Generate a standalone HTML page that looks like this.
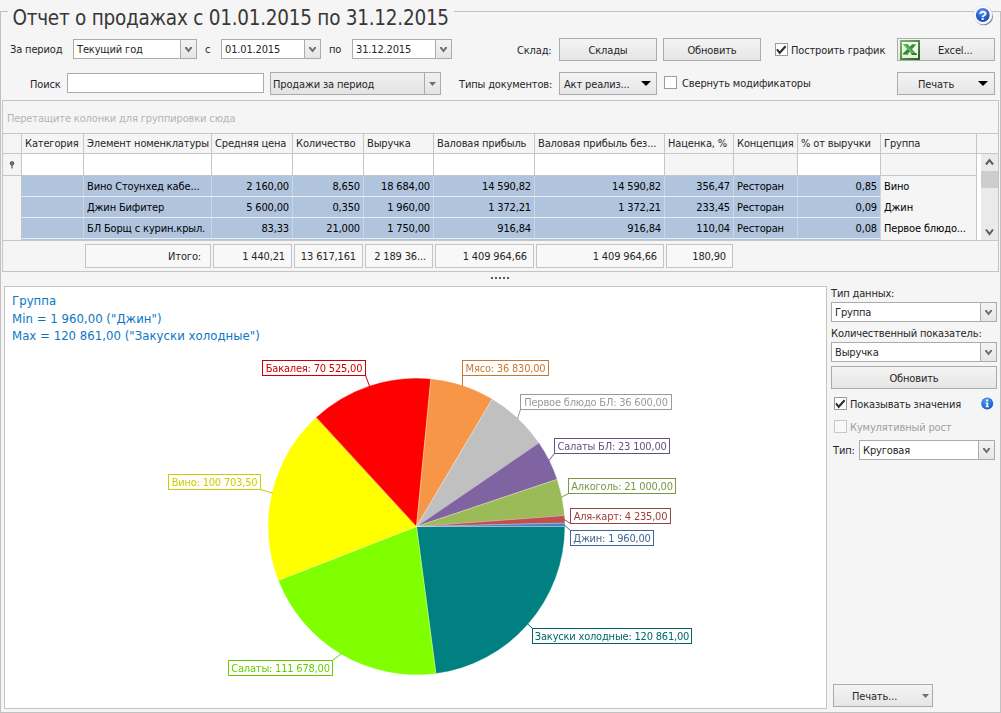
<!DOCTYPE html>
<html lang="ru"><head><meta charset="utf-8"><title>Отчет о продажах</title>
<style>
html,body{margin:0;padding:0}
body{width:1001px;height:713px;background:#f5f5f5;position:relative;overflow:hidden;font:11px "DejaVu Sans Condensed","Liberation Sans",sans-serif;color:#262626;letter-spacing:-0.15px}
div,span{box-sizing:border-box}
.a{position:absolute;white-space:nowrap}
.t{position:absolute;white-space:nowrap;line-height:14px;height:14px}
.btn{position:absolute;border:1px solid #ababab;background:linear-gradient(#f4f4f4,#e6e6e6);text-align:center;white-space:nowrap}
.inp{position:absolute;border:1px solid #ababab;background:#fff;white-space:nowrap}
.dd{position:absolute;top:0;right:0;bottom:0;width:16px;border-left:1px solid #ababab;background:linear-gradient(#f3f3f3,#e6e6e6)}
.cb{position:absolute;width:13px;height:13px;border:1px solid #9c9c9c;background:#fff}
.hc{position:absolute;top:134px;height:19px;border-right:1px solid #c6c6c6;padding:0 0 0 3px;line-height:20px;overflow:hidden;white-space:nowrap}
.fc{position:absolute;top:154px;height:21px;border-right:1px solid #c6c6c6;background:#fff}
.dc{position:absolute;height:20px;line-height:21px;padding:0 3px 0 3px;overflow:hidden;white-space:nowrap;background:#b0c4de;border-right:1px solid #ccd5e2;color:#000}
.r{text-align:right}
.ft{position:absolute;top:244px;height:24px;border:1px solid #c4c4c4;background:#f8f8f8;line-height:23px;text-align:right;padding:0 6px 0 0;white-space:nowrap;overflow:hidden}
.lb{will-change:transform;position:absolute;height:16px;border:1px solid;background:#fff;line-height:15px;text-align:center;white-space:nowrap;letter-spacing:-0.2px}
</style></head>
<body>
<div class="a" style="left:0;top:11px;width:1001px;height:702px;border:1px solid #c0c0c0;border-top:none"></div>
<div class="a" style="left:0;top:11px;width:8px;height:1px;background:#c0c0c0"></div>
<div class="a" style="left:454px;top:11px;width:547px;height:1px;background:#c0c0c0"></div>
<div class="a" style="left:12.4px;top:5px;font-size:20.5px;line-height:27px;color:#383838;letter-spacing:-0.25px">Отчет о продажах с 01.01.2015 по 31.12.2015</div>
<svg class="a" style="left:970.6px;top:2.6px" width="24" height="24" viewBox="0 0 24 24"><defs><radialGradient id="hg" cx="45%" cy="25%" r="80%"><stop offset="0" stop-color="#6d9bf2"/><stop offset="0.55" stop-color="#2b60d2"/><stop offset="1" stop-color="#1c47b0"/></radialGradient><filter id="hb" x="-20%" y="-20%" width="140%" height="140%"><feGaussianBlur stdDeviation="0.7"/></filter></defs><circle cx="12.8" cy="13" r="9.2" fill="#404048" opacity="0.75" filter="url(#hb)"/><circle cx="12" cy="12" r="9.3" fill="#fdfdff" stroke="#d5def0" stroke-width="0.6"/><circle cx="11.8" cy="12" r="6.9" fill="url(#hg)"/><text x="11.8" y="16.6" font-family="Liberation Sans,sans-serif" font-weight="bold" font-size="13.5" fill="#fff" text-anchor="middle">?</text></svg>
<div class="t" style="left:10px;top:43px">За период</div>
<div class="inp" style="left:73px;top:39px;width:124px;height:20px"><span class="a" style="left:3px;top:0;line-height:19px">Текущий год</span><span class="dd"><svg class="a" style="left:4px;top:7px" width="7" height="6" viewBox="0 0 7 6"><path d="M0 0 L1.6 0 L3.5 2.6 L5.4 0 L7 0 L7 1.3 L3.5 5.6 L0 1.3 Z" fill="#6e6e6e"/></svg></span></div>
<div class="t" style="left:205px;top:43px">с</div>
<div class="inp" style="left:221px;top:39px;width:100px;height:20px"><span class="a" style="left:3px;top:0;line-height:19px">01.01.2015</span><span class="dd"><svg class="a" style="left:4px;top:7px" width="7" height="6" viewBox="0 0 7 6"><path d="M0 0 L1.6 0 L3.5 2.6 L5.4 0 L7 0 L7 1.3 L3.5 5.6 L0 1.3 Z" fill="#6e6e6e"/></svg></span></div>
<div class="t" style="left:329px;top:43px">по</div>
<div class="inp" style="left:352px;top:39px;width:100px;height:20px"><span class="a" style="left:3px;top:0;line-height:19px">31.12.2015</span><span class="dd"><svg class="a" style="left:4px;top:7px" width="7" height="6" viewBox="0 0 7 6"><path d="M0 0 L1.6 0 L3.5 2.6 L5.4 0 L7 0 L7 1.3 L3.5 5.6 L0 1.3 Z" fill="#6e6e6e"/></svg></span></div>
<div class="t" style="left:517px;top:44px">Склад:</div>
<div class="btn" style="left:559px;top:38px;width:98px;height:23px;line-height:23px">Склады</div>
<div class="btn" style="left:663px;top:38px;width:98px;height:23px;line-height:23px">Обновить</div>
<div class="cb" style="left:775px;top:43px"><svg class="a" style="left:0;top:0" width="11" height="11" viewBox="0 0 11 11"><path d="M1 5.4 L3.7 8.8 L9.6 2.2" fill="none" stroke="#2e2e2e" stroke-width="2.1"/></svg></div>
<div class="t" style="left:791px;top:44px">Построить график</div>
<div class="btn" style="left:897px;top:38px;width:98px;height:23px;line-height:23px"><span class="a" style="left:40px;top:0">Excel...</span><svg class="a" style="left:2px;top:1px" width="20" height="20" viewBox="0 0 20 20"><defs><linearGradient id="xf" x1="0" y1="0" x2="1" y2="1"><stop offset="0" stop-color="#7fba6e"/><stop offset="0.5" stop-color="#4f8f40"/><stop offset="1" stop-color="#27591d"/></linearGradient><linearGradient id="xb" x1="0" y1="0" x2="0" y2="1"><stop offset="0" stop-color="#f7fbf5"/><stop offset="1" stop-color="#e3f0dd"/></linearGradient></defs><rect width="20" height="20" fill="url(#xf)"/><rect x="2" y="2" width="16" height="16" fill="url(#xb)"/><path d="M12.2 4.3 L16.3 4.4 L8 13.6 L2.9 13.6 Z" fill="#2f8f2f"/><path d="M2.9 13.4 L8.2 13.4 L8.2 14.5 L2.9 14.5 Z" fill="#1d5c1d"/><path d="M2.8 4.3 L7.6 4.1 L16.7 14.4 L11.9 14.5 Z" fill="#48a548"/><path d="M4.6 4.9 L13.6 14" stroke="#a9dda9" stroke-width="0.6" fill="none"/><path d="M11.6 13.6 L16.9 13.6 L16.9 14.7 L11.6 14.7 Z" fill="#103f10"/></svg></div>
<div class="t" style="left:30px;top:78px">Поиск</div>
<div class="inp" style="left:67px;top:73px;width:197px;height:20px"></div>
<div class="btn" style="left:270px;top:72px;width:171px;height:23px;line-height:23px;text-align:left;background:linear-gradient(#f1f1f1,#e3e3e3)"><span class="a" style="left:2px;top:0">Продажи за период</span><span class="a" style="left:153px;top:0;width:1px;height:21px;background:#ababab"></span><svg class="a" style="left:158px;top:9px" width="7" height="4" viewBox="0 0 7 4"><path d="M0 0 L7 0 L3.5 4 Z" fill="#707070"/></svg></div>
<div class="t" style="left:459px;top:78px">Типы документов:</div>
<div class="btn" style="left:559px;top:72px;width:98px;height:23px;line-height:23px;text-align:left"><span class="a" style="left:4px;top:0">Акт реализ...</span><svg class="a" style="left:81px;top:8px" width="10" height="5" viewBox="0 0 10 5"><path d="M0 0 L10 0 L5 5 Z" fill="#000"/></svg></div>
<div class="cb" style="left:664px;top:76px"></div>
<div class="t" style="left:682px;top:77px">Свернуть модификаторы</div>
<div class="btn" style="left:897px;top:72px;width:98px;height:23px;line-height:23px"><span class="a" style="left:20px;top:0">Печать</span><svg class="a" style="left:80px;top:8px" width="10" height="5" viewBox="0 0 10 5"><path d="M0 0 L10 0 L5 5 Z" fill="#000"/></svg></div>
<div class="a" style="left:2px;top:100px;width:997px;height:172px;border:1px solid #c4c4c4;background:#f5f5f5"></div>
<div class="t" style="left:7px;top:112px;color:#b4b4b4">Перетащите колонки для группировки сюда</div>
<div class="a" style="left:3px;top:133px;width:995px;height:1px;background:#c6c6c6"></div>
<div class="a" style="left:3px;top:153px;width:995px;height:1px;background:#c6c6c6"></div>
<div class="hc" style="left:3px;width:19px"></div>
<div class="hc" style="left:22px;width:62px">Категория</div>
<div class="hc" style="left:84px;width:128px">Элемент номенклатуры</div>
<div class="hc" style="left:212px;width:81px">Средняя цена</div>
<div class="hc" style="left:293px;width:71px">Количество</div>
<div class="hc" style="left:364px;width:70px">Выручка</div>
<div class="hc" style="left:434px;width:101px">Валовая прибыль</div>
<div class="hc" style="left:535px;width:130px">Валовая прибыль без...</div>
<div class="hc" style="left:665px;width:69px">Наценка, %</div>
<div class="hc" style="left:734px;width:64px">Концепция</div>
<div class="hc" style="left:798px;width:83px">% от выручки</div>
<div class="hc" style="left:881px;width:96px">Группа</div>
<div class="fc" style="left:22px;width:62px;background:#fff"></div>
<div class="fc" style="left:84px;width:128px;background:#fff"></div>
<div class="fc" style="left:212px;width:81px;background:#fff"></div>
<div class="fc" style="left:293px;width:71px;background:#fff"></div>
<div class="fc" style="left:364px;width:70px;background:#fff"></div>
<div class="fc" style="left:434px;width:101px;background:#fff"></div>
<div class="fc" style="left:535px;width:130px;background:#fff"></div>
<div class="fc" style="left:665px;width:69px;background:#f5f5f5"></div>
<div class="fc" style="left:734px;width:64px;background:#f5f5f5"></div>
<div class="fc" style="left:798px;width:83px;background:#fff"></div>
<div class="fc" style="left:881px;width:96px;background:#f5f5f5"></div>
<div class="a" style="left:3px;top:175px;width:974px;height:1px;background:#c6c6c6"></div>
<div class="a" style="left:21px;top:154px;width:1px;height:86px;background:#c6c6c6"></div>
<svg class="a" style="left:9px;top:161px" width="6" height="8" viewBox="0 0 6 9"><circle cx="3" cy="2.6" r="2" fill="#555" stroke="#333" stroke-width="0.8"/><circle cx="3" cy="2.2" r="0.9" fill="#bbb"/><path d="M3 4.6 L3 8.4" stroke="#333" stroke-width="1.1"/></svg>
<div class="dc" style="left:22px;top:176px;width:62px"></div>
<div class="dc" style="left:84px;top:176px;width:128px">Вино Стоунхед кабе...</div>
<div class="dc r" style="left:212px;top:176px;width:81px">2 160,00</div>
<div class="dc r" style="left:293px;top:176px;width:71px">8,650</div>
<div class="dc r" style="left:364px;top:176px;width:70px">18 684,00</div>
<div class="dc r" style="left:434px;top:176px;width:101px">14 590,82</div>
<div class="dc r" style="left:535px;top:176px;width:130px">14 590,82</div>
<div class="dc r" style="left:665px;top:176px;width:69px">356,47</div>
<div class="dc" style="left:734px;top:176px;width:64px">Ресторан</div>
<div class="dc r" style="left:798px;top:176px;width:83px">0,85</div>
<div class="dc" style="left:881px;top:176px;width:96px;background:#f5f5f5;border-right:1px solid #c6c6c6">Вино</div>
<div class="a" style="left:22px;top:196px;width:859px;height:1px;background:#e9eef5"></div>
<div class="dc" style="left:22px;top:197px;width:62px"></div>
<div class="dc" style="left:84px;top:197px;width:128px">Джин Бифитер</div>
<div class="dc r" style="left:212px;top:197px;width:81px">5 600,00</div>
<div class="dc r" style="left:293px;top:197px;width:71px">0,350</div>
<div class="dc r" style="left:364px;top:197px;width:70px">1 960,00</div>
<div class="dc r" style="left:434px;top:197px;width:101px">1 372,21</div>
<div class="dc r" style="left:535px;top:197px;width:130px">1 372,21</div>
<div class="dc r" style="left:665px;top:197px;width:69px">233,45</div>
<div class="dc" style="left:734px;top:197px;width:64px">Ресторан</div>
<div class="dc r" style="left:798px;top:197px;width:83px">0,09</div>
<div class="dc" style="left:881px;top:197px;width:96px;background:#f5f5f5;border-right:1px solid #c6c6c6">Джин</div>
<div class="a" style="left:22px;top:217px;width:859px;height:1px;background:#e9eef5"></div>
<div class="dc" style="left:22px;top:218px;width:62px"></div>
<div class="dc" style="left:84px;top:218px;width:128px">БЛ Борщ с курин.крыл.</div>
<div class="dc r" style="left:212px;top:218px;width:81px">83,33</div>
<div class="dc r" style="left:293px;top:218px;width:71px">21,000</div>
<div class="dc r" style="left:364px;top:218px;width:70px">1 750,00</div>
<div class="dc r" style="left:434px;top:218px;width:101px">916,84</div>
<div class="dc r" style="left:535px;top:218px;width:130px">916,84</div>
<div class="dc r" style="left:665px;top:218px;width:69px">110,04</div>
<div class="dc" style="left:734px;top:218px;width:64px">Ресторан</div>
<div class="dc r" style="left:798px;top:218px;width:83px">0,08</div>
<div class="dc" style="left:881px;top:218px;width:96px;background:#f5f5f5;border-right:1px solid #c6c6c6">Первое блюдо...</div>
<div class="a" style="left:22px;top:239px;width:859px;height:1px;background:#b0c4de"></div>
<div class="a" style="left:3px;top:240px;width:995px;height:31px;background:#f5f5f5;border-top:1px solid #c6c6c6"></div>
<div class="a" style="left:22px;top:238px;width:859px;height:1px;background:#e9eef5"></div>
<div class="a" style="left:976px;top:134px;width:1px;height:106px;background:#c6c6c6"></div>
<div class="a" style="left:977px;top:154px;width:4px;height:86px;background:#fff"></div>
<div class="a" style="left:981px;top:154px;width:17px;height:86px;background:#eaeaea"></div>
<div class="a" style="left:981px;top:171px;width:17px;height:17px;background:#cdcdcd"></div>
<svg class="a" style="left:985px;top:158px" width="9" height="8" viewBox="0 0 9 8"><path d="M1 6.5 L4.5 2.2 L8 6.5" fill="none" stroke="#5c5c5c" stroke-width="2"/></svg>
<svg class="a" style="left:985px;top:228px" width="9" height="8" viewBox="0 0 9 8"><path d="M1 1.5 L4.5 6 L8 1.5" fill="none" stroke="#5c5c5c" stroke-width="2"/></svg>
<div class="ft" style="left:85px;width:126px;padding-right:9px">Итого:</div>
<div class="ft" style="left:213px;width:79px">1 440,21</div>
<div class="ft" style="left:294px;width:69px">13 617,161</div>
<div class="ft" style="left:365px;width:68px">2 189 36...</div>
<div class="ft" style="left:435px;width:99px">1 409 964,66</div>
<div class="ft" style="left:536px;width:128px">1 409 964,66</div>
<div class="ft" style="left:666px;width:67px">180,90</div>
<div class="a" style="left:491px;top:277px;width:2px;height:2px;background:#5a5a5a"></div>
<div class="a" style="left:495px;top:277px;width:2px;height:2px;background:#5a5a5a"></div>
<div class="a" style="left:499px;top:277px;width:2px;height:2px;background:#5a5a5a"></div>
<div class="a" style="left:503px;top:277px;width:2px;height:2px;background:#5a5a5a"></div>
<div class="a" style="left:507px;top:277px;width:2px;height:2px;background:#5a5a5a"></div>
<div class="a" style="left:4px;top:286px;width:823px;height:423px;border:1px solid #c4c4c4;background:#fff"></div>
<div class="a" style="left:12px;top:292px;font-size:13px;line-height:17px;color:#0b76c4;letter-spacing:0.04px">Группа</div>
<div class="a" style="left:12px;top:309.5px;font-size:13px;line-height:17px;color:#0b76c4;letter-spacing:0.04px">Min = 1 960,00 ("Джин")</div>
<div class="a" style="left:12px;top:327.4px;font-size:13px;line-height:17px;color:#0b76c4;letter-spacing:0.04px">Max = 120 861,00 ("Закуски холодные")</div>
<svg class="a" style="left:0;top:0" width="1001" height="713" viewBox="0 0 1001 713"><path d="M416.5 526.5 L564.50 526.50 A148 148 0 0 1 435.86 673.23 Z" fill="#008080" stroke="#008080" stroke-width="0.5"/><path d="M416.5 526.5 L435.86 673.23 A148 148 0 0 1 278.61 580.26 Z" fill="#7fff00" stroke="#7fff00" stroke-width="0.5"/><path d="M416.5 526.5 L278.61 580.26 A148 148 0 0 1 316.38 417.51 Z" fill="#ffff00" stroke="#ffff00" stroke-width="0.5"/><path d="M416.5 526.5 L316.38 417.51 A148 148 0 0 1 430.84 379.20 Z" fill="#ff0000" stroke="#ff0000" stroke-width="0.5"/><path d="M416.5 526.5 L430.84 379.20 A148 148 0 0 1 492.05 399.24 Z" fill="#f79646" stroke="#f79646" stroke-width="0.5"/><path d="M416.5 526.5 L492.05 399.24 A148 148 0 0 1 538.73 443.04 Z" fill="#c0c0c0" stroke="#c0c0c0" stroke-width="0.5"/><path d="M416.5 526.5 L538.73 443.04 A148 148 0 0 1 556.80 479.39 Z" fill="#8064a2" stroke="#8064a2" stroke-width="0.5"/><path d="M416.5 526.5 L556.80 479.39 A148 148 0 0 1 564.10 515.59 Z" fill="#9bbb59" stroke="#9bbb59" stroke-width="0.5"/><path d="M416.5 526.5 L564.10 515.59 A148 148 0 0 1 564.46 523.05 Z" fill="#c0504d" stroke="#c0504d" stroke-width="0.5"/><path d="M416.5 526.5 L564.46 523.05 A148 148 0 0 1 564.50 526.50 Z" fill="#4f81bd" stroke="#4f81bd" stroke-width="0.5"/><path d="M416.5 526.5 L564.50 526.50" stroke="#fff" stroke-opacity="0.45" stroke-width="0.9" fill="none"/><path d="M416.5 526.5 L435.86 673.23" stroke="#fff" stroke-opacity="0.45" stroke-width="0.9" fill="none"/><path d="M416.5 526.5 L278.61 580.26" stroke="#fff" stroke-opacity="0.45" stroke-width="0.9" fill="none"/><path d="M416.5 526.5 L316.38 417.51" stroke="#fff" stroke-opacity="0.45" stroke-width="0.9" fill="none"/><path d="M416.5 526.5 L430.84 379.20" stroke="#fff" stroke-opacity="0.45" stroke-width="0.9" fill="none"/><path d="M416.5 526.5 L492.05 399.24" stroke="#fff" stroke-opacity="0.45" stroke-width="0.9" fill="none"/><path d="M416.5 526.5 L538.73 443.04" stroke="#fff" stroke-opacity="0.45" stroke-width="0.9" fill="none"/><path d="M416.5 526.5 L556.80 479.39" stroke="#fff" stroke-opacity="0.45" stroke-width="0.9" fill="none"/><path d="M416.5 526.5 L564.10 515.59" stroke="#fff" stroke-opacity="0.45" stroke-width="0.9" fill="none"/><path d="M416.5 526.5 L564.46 523.05" stroke="#fff" stroke-opacity="0.45" stroke-width="0.9" fill="none"/><path d="M527.4 623.7 L532.5 628.5" stroke="#006666" stroke-width="1" fill="none"/><path d="M341.4 653.5 L332.5 660.5" stroke="#66cc00" stroke-width="1" fill="none"/><path d="M272.8 493.2 L260.5 489.5" stroke="#cccc00" stroke-width="1" fill="none"/><path d="M369.7 386.6 L365.5 375.5" stroke="#cc0000" stroke-width="1" fill="none"/><path d="M462.4 386.3 L462.5 375.5" stroke="#c67838" stroke-width="1" fill="none"/><path d="M517.4 419.0 L520.5 409.5" stroke="#9a9a9a" stroke-width="1" fill="none"/><path d="M548.6 460.8 L554.5 453.5" stroke="#665082" stroke-width="1" fill="none"/><path d="M561.1 497.4 L568.5 493.5" stroke="#7c9647" stroke-width="1" fill="none"/><path d="M563.8 519.3 L570.5 523.5" stroke="#9a403e" stroke-width="1" fill="none"/><path d="M564.0 524.8 L570.5 530.5" stroke="#3f6797" stroke-width="1" fill="none"/></svg>
<div class="lb" style="left:532px;top:628px;width:160px;color:#006666;border-color:#006666">Закуски холодные: 120 861,00</div>
<div class="lb" style="left:228px;top:660px;width:105px;color:#66cc00;border-color:#66cc00">Салаты: 111 678,00</div>
<div class="lb" style="left:168px;top:474px;width:93px;color:#cccc00;border-color:#cccc00">Вино: 100 703,50</div>
<div class="lb" style="left:262px;top:360px;width:104px;color:#cc0000;border-color:#cc0000">Бакалея: 70 525,00</div>
<div class="lb" style="left:462px;top:360px;width:87px;color:#c67838;border-color:#c67838">Мясо: 36 830,00</div>
<div class="lb" style="left:520px;top:394px;width:152px;color:#9a9a9a;border-color:#9a9a9a">Первое блюдо БЛ: 36 600,00</div>
<div class="lb" style="left:554px;top:438px;width:116px;color:#665082;border-color:#665082">Салаты БЛ: 23 100,00</div>
<div class="lb" style="left:568px;top:478px;width:108px;color:#7c9647;border-color:#7c9647">Алкоголь: 21 000,00</div>
<div class="lb" style="left:570px;top:508px;width:101px;color:#9a403e;border-color:#9a403e">Аля-карт: 4 235,00</div>
<div class="lb" style="left:570px;top:530px;width:84px;color:#3f6797;border-color:#3f6797">Джин: 1 960,00</div>
<div class="t" style="left:831px;top:287px">Тип данных:</div>
<div class="inp" style="left:831px;top:302px;width:166px;height:20px"><span class="a" style="left:3px;top:0;line-height:19px">Группа</span><span class="dd"><svg class="a" style="left:4px;top:7px" width="7" height="6" viewBox="0 0 7 6"><path d="M0 0 L1.6 0 L3.5 2.6 L5.4 0 L7 0 L7 1.3 L3.5 5.6 L0 1.3 Z" fill="#6e6e6e"/></svg></span></div>
<div class="t" style="left:831px;top:327px">Количественный показатель:</div>
<div class="inp" style="left:831px;top:342px;width:166px;height:20px"><span class="a" style="left:3px;top:0;line-height:19px">Выручка</span><span class="dd"><svg class="a" style="left:4px;top:7px" width="7" height="6" viewBox="0 0 7 6"><path d="M0 0 L1.6 0 L3.5 2.6 L5.4 0 L7 0 L7 1.3 L3.5 5.6 L0 1.3 Z" fill="#6e6e6e"/></svg></span></div>
<div class="btn" style="left:831px;top:366px;width:166px;height:23px;line-height:23px">Обновить</div>
<div class="cb" style="left:834px;top:397px"><svg class="a" style="left:0;top:0" width="11" height="11" viewBox="0 0 11 11"><path d="M1 5.4 L3.7 8.8 L9.6 2.2" fill="none" stroke="#2e2e2e" stroke-width="2.1"/></svg></div>
<div class="t" style="left:850px;top:398px">Показывать значения</div>
<svg class="a" style="left:981px;top:397px" width="13" height="13" viewBox="0 0 13 13"><defs><radialGradient id="ig" cx="40%" cy="25%" r="80%"><stop offset="0" stop-color="#4f9af0"/><stop offset="1" stop-color="#1458c8"/></radialGradient></defs><circle cx="6.2" cy="6.4" r="6" fill="url(#ig)"/><circle cx="6.2" cy="3.4" r="1.1" fill="#fff"/><path d="M4.6 5.4 H7.2 V9.2 H8 V10.2 H4.6 V9.2 H5.4 V6.4 H4.6 Z" fill="#fff"/></svg>
<div class="cb" style="left:834px;top:420px;border-color:#c8c8c8;background:#f8f8f8"></div>
<div class="t" style="left:850px;top:421px;color:#a0a0a0">Кумулятивный рост</div>
<div class="t" style="left:833px;top:444px">Тип:</div>
<div class="inp" style="left:859px;top:440px;width:136px;height:20px"><span class="a" style="left:3px;top:0;line-height:19px">Круговая</span><span class="dd"><svg class="a" style="left:4px;top:7px" width="7" height="6" viewBox="0 0 7 6"><path d="M0 0 L1.6 0 L3.5 2.6 L5.4 0 L7 0 L7 1.3 L3.5 5.6 L0 1.3 Z" fill="#6e6e6e"/></svg></span></div>
<div class="btn" style="left:833px;top:684px;width:100px;height:23px;line-height:23px"><span class="a" style="left:18px;top:0">Печать...</span><svg class="a" style="left:88px;top:9px" width="7" height="4" viewBox="0 0 7 4"><path d="M0 0 L7 0 L3.5 4 Z" fill="#707070"/></svg></div>
</body></html>
